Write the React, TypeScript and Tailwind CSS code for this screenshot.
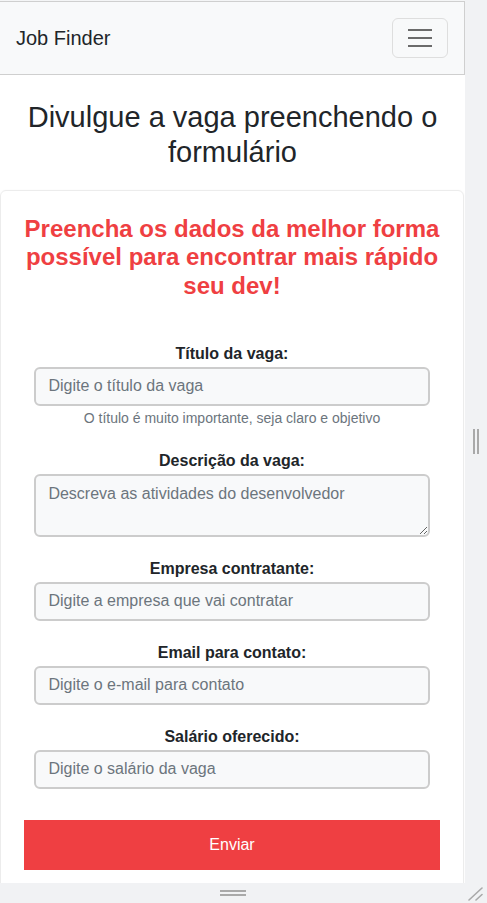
import React from 'react'

const fields = [
  { label: 'Empresa contratante:', placeholder: 'Digite a empresa que vai contratar' },
  { label: 'Email para contato:', placeholder: 'Digite o e-mail para contato' },
  { label: 'Salário oferecido:', placeholder: 'Digite o salário da vaga' },
]

function Label({ children }: { children: React.ReactNode }) {
  return <label className="block text-center font-bold text-[16px] leading-6 text-[#212529] mb-px">{children}</label>
}

const inputClass =
  'block w-[95%] mx-auto h-[39px] px-3 border-2 border-[#cccccc] rounded-[6px] bg-[#f8f9fa] text-[16px] text-[#212529] placeholder:text-[#6c757d] outline-none'

export default function App() {
  return (
    <div className="w-[487px] h-[903px] bg-[#f1f2f4] flex flex-col overflow-hidden font-['Liberation_Sans',Arial,sans-serif]">
      <div className="flex h-[883px]">
        <div className="w-[465px] h-full bg-white overflow-hidden flex flex-col">
          <div className="h-px bg-[#f4f5f6] shrink-0" />
          <nav className="h-[74px] shrink-0 flex items-center justify-between pl-4 pr-4 bg-[#f8f9fa] border-t border-b border-r border-[#cfcfcf]">
            <span className="text-[20px] text-[#212529]">Job Finder</span>
            <button className="w-[56px] h-[40px] rounded-[6px] border border-[#dedede] flex flex-col items-center justify-center gap-[6px]">
              <span className="block w-6 h-[2px] bg-[#6b6b6b]" />
              <span className="block w-6 h-[2px] bg-[#6b6b6b]" />
              <span className="block w-6 h-[2px] bg-[#6b6b6b]" />
            </button>
          </nav>

          <div className="pt-[25px] pb-[20px] shrink-0">
            <h1 className="text-center text-[29px] leading-[1.2] text-[#212529] px-6">
              Divulgue a vaga preenchendo o formulário
            </h1>
          </div>

          <div className="w-[464px] border border-[#ececec] rounded-md shadow-[0_0_2px_rgba(0,0,0,0.04)] px-[23px] pt-6 pb-6">
            <h3 className="-mx-2 text-center font-bold text-[24px] leading-[1.2] text-[#ef3f42]">
              Preencha os dados da melhor forma
              <br />
              possível para encontrar mais rápido
              <br />
              seu dev!
            </h3>

            <form className="mt-[41px]" onSubmit={(e) => e.preventDefault()}>
              <div className="mb-5">
                <Label>Título da vaga:</Label>
                <input className={inputClass} placeholder="Digite o título da vaga" />
                <p className="mt-px text-center text-[14px] leading-[22px] text-[#6c757d]">
                  O título é muito importante, seja claro e objetivo
                </p>
              </div>

              <div className="mb-5">
                <Label>Descrição da vaga:</Label>
                <textarea
                  className="block w-[95%] mx-auto h-[63px] px-3 py-[6px] border-2 border-[#cccccc] rounded-[6px] bg-[#f8f9fa] text-[16px] leading-6 text-[#212529] placeholder:text-[#6c757d] outline-none"
                  placeholder="Descreva as atividades do desenvolvedor"
                />
              </div>

              {fields.map((f) => (
                <div key={f.label} className="mb-5">
                  <Label>{f.label}</Label>
                  <input className={inputClass} placeholder={f.placeholder} />
                </div>
              ))}

              <button type="submit" className="mt-[11px] w-full h-[50px] bg-[#ef3f42] text-white text-[16px]">
                Enviar
              </button>
            </form>
          </div>
        </div>

        <div className="w-[22px] h-full flex items-center justify-center gap-[2px] pr-px">
          <span className="block w-[2px] h-[25px] bg-[#a9a9a9]" />
          <span className="block w-[2px] h-[25px] bg-[#a9a9a9]" />
        </div>
      </div>

      <div className="flex h-[20px]">
        <div className="w-[465px] flex flex-col items-center justify-center gap-[2px]">
          <span className="block w-[26px] h-[2px] bg-[#a9a9a9]" />
          <span className="block w-[26px] h-[2px] bg-[#a9a9a9]" />
        </div>
        <div className="w-[22px] flex items-end justify-center pb-[2px]">
          <svg width="16" height="15" viewBox="0 0 16 15">
            <path d="M1 14 L14 2 M8 14 L14 8.5" stroke="#a9a9a9" strokeWidth="1.6" strokeLinecap="round" />
          </svg>
        </div>
      </div>
    </div>
  )
}
